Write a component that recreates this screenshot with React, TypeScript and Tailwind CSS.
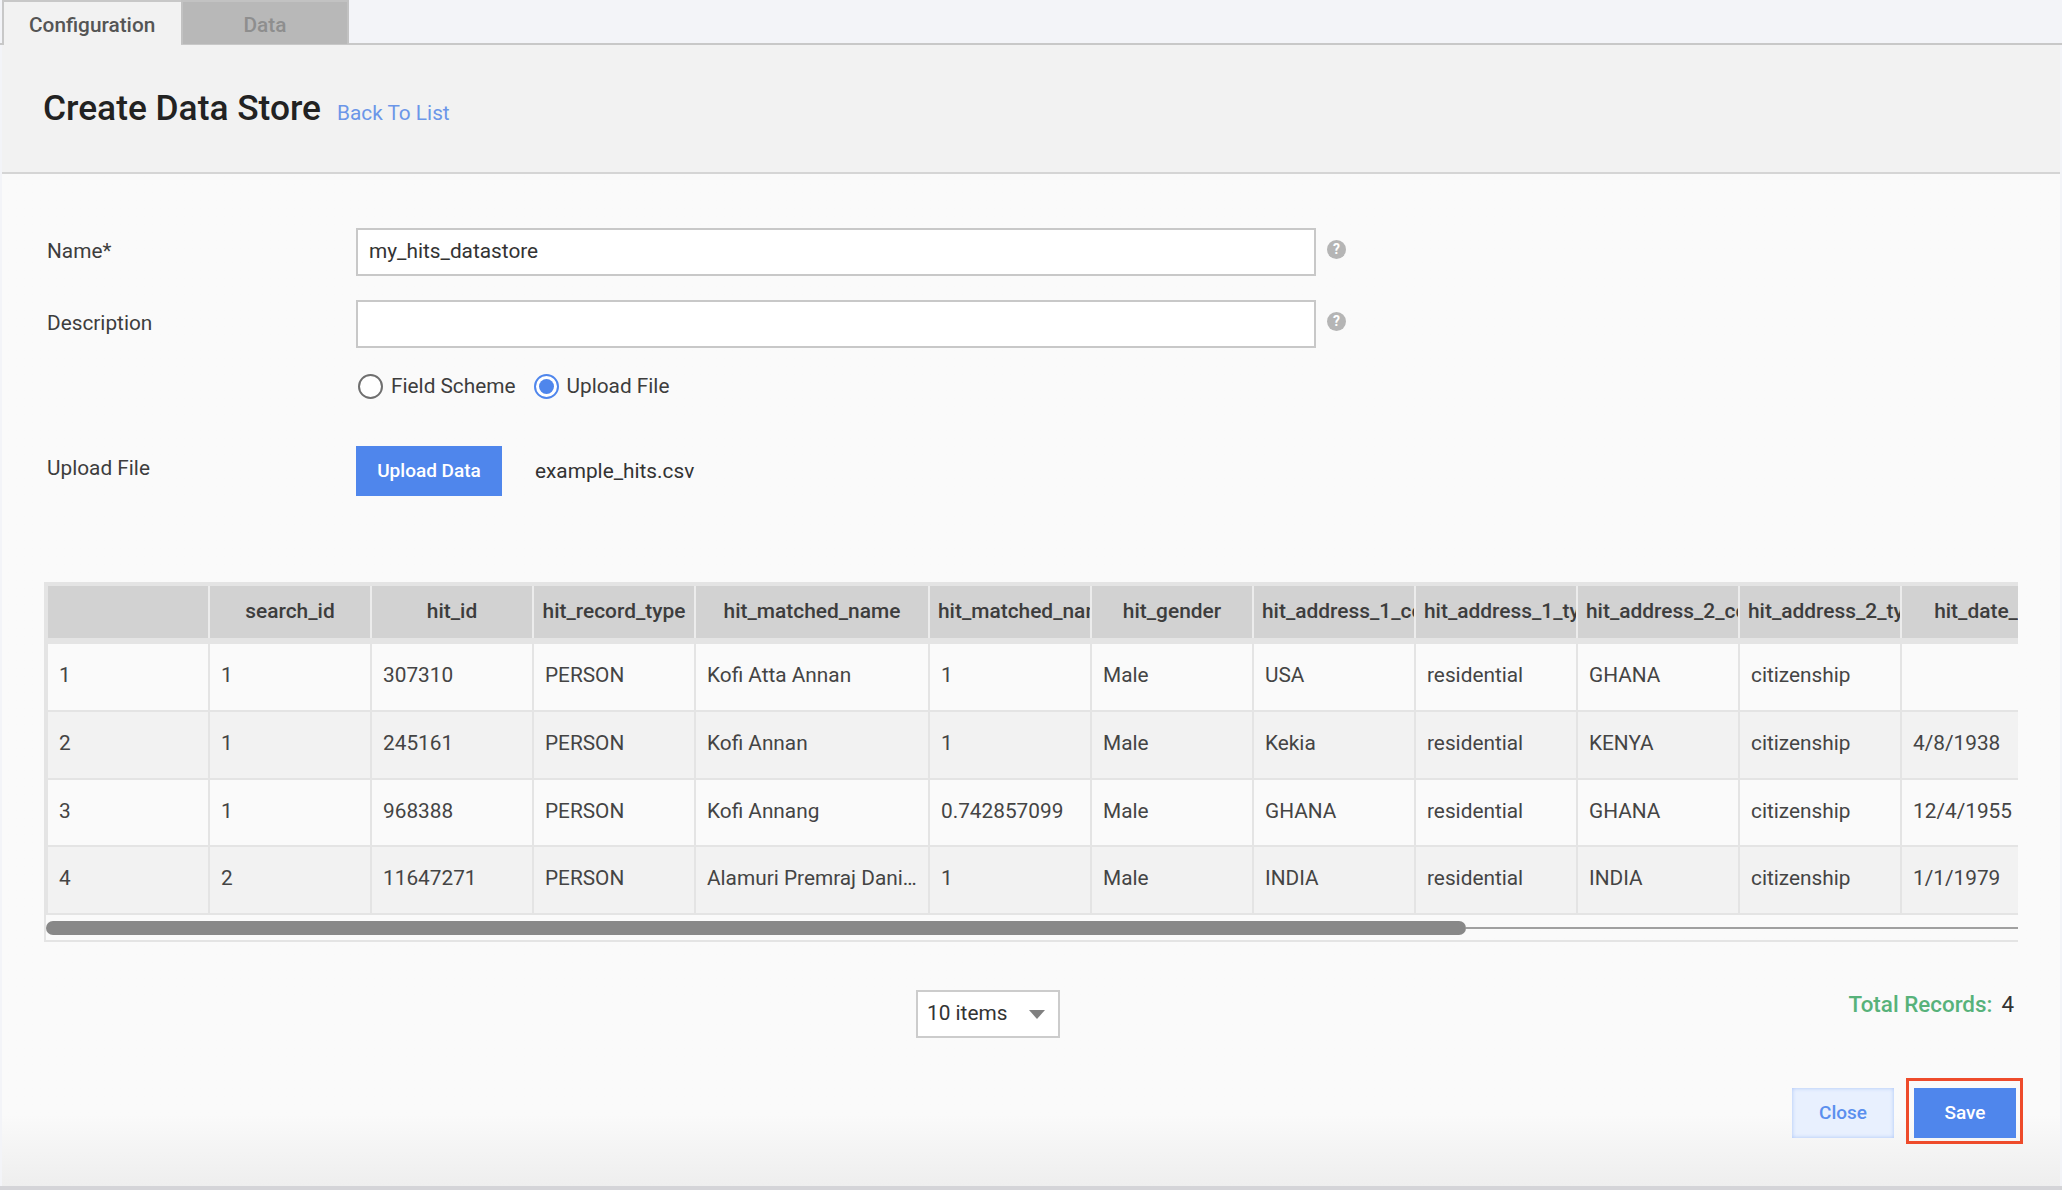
import React from 'react';

const columns = [
  { name: '', width: 'w-[162px]' },
  { name: 'search_id', width: 'w-[162px]' },
  { name: 'hit_id', width: 'w-[162px]' },
  { name: 'hit_record_type', width: 'w-[162px]' },
  { name: 'hit_matched_name', width: 'w-[234px]' },
  { name: 'hit_matched_name_score', width: 'w-[162px]' },
  { name: 'hit_gender', width: 'w-[162px]' },
  { name: 'hit_address_1_country', width: 'w-[162px]' },
  { name: 'hit_address_1_type', width: 'w-[162px]' },
  { name: 'hit_address_2_country', width: 'w-[162px]' },
  { name: 'hit_address_2_type', width: 'w-[162px]' },
  { name: 'hit_date_1', width: 'w-[162px]' },
];

const rows = [
  ['1', '1', '307310', 'PERSON', 'Kofi Atta Annan', '1', 'Male', 'USA', 'residential', 'GHANA', 'citizenship', ''],
  ['2', '1', '245161', 'PERSON', 'Kofi Annan', '1', 'Male', 'Kekia', 'residential', 'KENYA', 'citizenship', '4/8/1938'],
  ['3', '1', '968388', 'PERSON', 'Kofi Annang', '0.742857099', 'Male', 'GHANA', 'residential', 'GHANA', 'citizenship', '12/4/1955'],
  ['4', '2', '11647271', 'PERSON', 'Alamuri Premraj Daniel Kumar', '1', 'Male', 'INDIA', 'residential', 'INDIA', 'citizenship', '1/1/1979'],
];

function HelpIcon() {
  return (
    <span className="mb-[6px] ml-[11px] flex h-[19px] w-[19px] items-center justify-center rounded-full bg-[#b5b5b5] text-[14px] leading-none font-bold text-white">
      ?
    </span>
  );
}

function Radio({ checked, label }: { checked?: boolean; label: string }) {
  return (
    <label className="flex items-center gap-[8px] text-[20.8px] text-[#3d3d3d]">
      <span
        className={`flex h-[25px] w-[25px] items-center justify-center rounded-full border-2 bg-white ${
          checked ? 'border-[#4f86ec]' : 'border-[#6f6f6f]'
        }`}
      >
        {checked && <span className="h-[15px] w-[15px] rounded-full bg-[#4f86ec]" />}
      </span>
      <span className="pt-[2px]">{label}</span>
    </label>
  );
}

function DataGrid() {
  return (
    <div className="mt-[86px] mr-[42px] ml-[42px] overflow-hidden border-t-4 border-b-2 border-l-2 border-[#e4e4e4]">
      <div className="flex w-max border-b-[6px] border-l-2 border-[#e4e4e4] bg-[#d2d2d2]">
        {columns.map((col, i) => (
          <div
            key={i}
            className={`${col.width} h-[52px] shrink-0 overflow-hidden border-r-2 border-[#ececec] px-2 text-center text-[20.9px] leading-[50px] font-medium whitespace-nowrap text-[#3d3d3d]`}
          >
            {col.name}
          </div>
        ))}
      </div>
      {rows.map((row, r) => (
        <div key={r} className={`flex w-max border-b-2 border-l-2 border-[#e4e4e4] ${r % 2 ? 'bg-[#f2f2f2]' : 'bg-[#fafafa]'}`}>
          {row.map((cell, i) => (
            <div
              key={i}
              className={`${columns[i].width} h-[65.75px] shrink-0 truncate border-r-2 border-[#e4e4e4] pr-[10px] pl-[11px] text-[20.8px] leading-[63px] text-[#444444]`}
            >
              {cell}
            </div>
          ))}
        </div>
      ))}
      <div className="flex h-[25px] items-center">
        <div className="h-[14px] w-[1420px] rounded-full bg-[#888888]" />
        <div className="h-[2px] flex-1 bg-[#a0a0a0]" />
      </div>
    </div>
  );
}

export default function App() {
  return (
    <div className="h-[1190px] w-[2062px] overflow-hidden bg-[#f3f4f8] font-['Roboto',sans-serif]">
      <div className="flex h-[45px] border-b-2 border-[#c8c8c8]">
        <div className="ml-[2px] h-[45px] w-[179px] border-t-2 border-l-2 border-[#c8c8c8] bg-[#f2f2f2] pt-[8px] pl-[25px] text-[20.8px] font-medium text-[#555555]">
          Configuration
        </div>
        <div className="h-[44px] w-[168px] border-2 border-b-0 border-[#c2c2c2] bg-[#b8b8b8] pt-[8px] text-center text-[20.8px] font-medium text-[#8e8e8e]">
          Data
        </div>
      </div>

      <div className="mx-[2px] flex h-[1141px] flex-col">
        <div className="flex h-[129px] items-baseline gap-[16px] border-b-2 border-[#d5d5d5] bg-[#f2f2f2] pt-[37px] pl-[41px]">
          <h1 className="text-[35.3px] font-medium text-[#222222]">Create Data Store</h1>
          <a className="text-[20.8px] text-[#6b96e8]">Back To List</a>
        </div>

        <div className="flex-1 bg-linear-to-b from-[#fafafa] via-[#fafafa] via-[93%] to-[#eeeeee] pt-[54px]">
          <div className="flex items-center">
            <span className="w-[354px] pl-[45px] text-[20.8px] text-[#3d3d3d]">Name*</span>
            <input
              readOnly
              value="my_hits_datastore"
              className="h-[48px] w-[960px] border-2 border-[#c8c8c8] bg-white px-[11px] pb-[2px] text-[20.8px] text-[#333333]"
            />
            <HelpIcon />
          </div>
          <div className="mt-[24px] flex items-center">
            <span className="mb-[1px] w-[354px] pl-[45px] text-[20.8px] text-[#3d3d3d]">Description</span>
            <input readOnly className="h-[48px] w-[960px] border-2 border-[#c8c8c8] bg-white px-[11px] text-[20.8px]" />
            <HelpIcon />
          </div>
          <div className="mt-[26px] flex h-[24px] items-center gap-[18px] pl-[356px]">
            <Radio label="Field Scheme" />
            <Radio checked label="Upload File" />
          </div>
          <div className="mt-[48px] flex items-center">
            <span className="mb-[4px] w-[354px] pl-[45px] text-[20.8px] text-[#3d3d3d]">Upload File</span>
            <button className="h-[50px] w-[146px] bg-[#4f86ec] text-[19px] font-medium text-white">Upload Data</button>
            <span className="ml-[33px] pt-[1px] text-[20.8px] text-[#333333]">example_hits.csv</span>
          </div>

          <DataGrid />

          <div className="mt-[48px] flex items-start">
            <div className="ml-[914px] flex h-[48px] w-[144px] items-center justify-between border-2 border-[#cccccc] bg-white pr-[13px] pl-[9px] text-[20.8px] text-[#333333]">
              10 items
              <svg width="16" height="9" viewBox="0 0 16 9" className="fill-[#808080]">
                <path d="M0 0h16L8 9z" />
              </svg>
            </div>
            <div className="mr-[46px] ml-auto -mt-[2px] flex gap-[9px] text-[22.4px]">
              <span className="font-medium text-[#57b27a]">Total Records:</span>
              <span className="text-[#333333]">4</span>
            </div>
          </div>

          <div className="mt-[50px] flex justify-end gap-[20px] pr-[44px]">
            <button className="h-[50px] w-[102px] bg-[#e8f0fe] text-[19px] font-medium text-[#5b8fee] shadow-[inset_0_0_4px_#a9c4f8]">
              Close
            </button>
            <div className="relative">
              <button className="h-[50px] w-[102px] bg-[#4f86ec] text-[19px] font-medium text-white">Save</button>
              <div className="absolute -top-[10px] -right-[7px] -bottom-[6px] -left-[8px] border-[3px] border-[#ee4b2b]" />
            </div>
          </div>
        </div>
      </div>
      <div className="h-[4px] bg-[#d4d4d8]" />
    </div>
  );
}
